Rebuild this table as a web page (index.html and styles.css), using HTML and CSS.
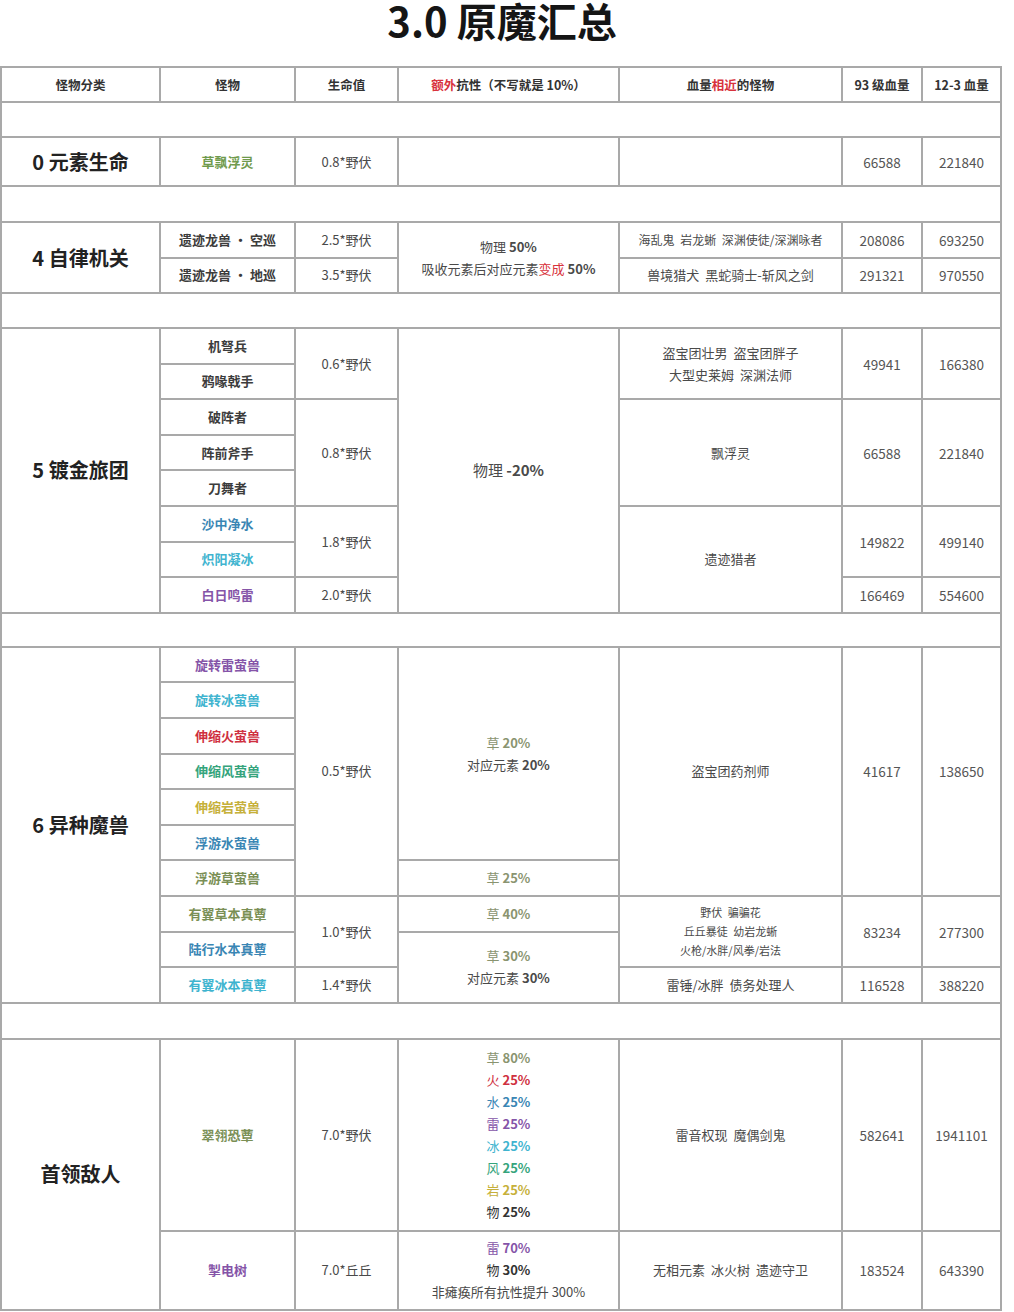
FILE: index.html
```html
<!DOCTYPE html>
<html lang="zh-CN">
<head>
<meta charset="utf-8">
<title>3.0 原魔汇总</title>
<link rel="stylesheet" href="styles.css">
</head>
<body>
<h1 class="title">3.0 原魔汇总</h1>
<table class="sheet">
  <colgroup>
    <col class="c-cat"><col class="c-mon"><col class="c-hp"><col class="c-res"><col class="c-rel"><col class="c-n93"><col class="c-n123">
  </colgroup>
  <thead>
    <tr class="h-head">
      <th>怪物分类</th>
      <th>怪物</th>
      <th>生命值</th>
      <th><span class="red">额外</span>抗性（不写就是 10%）</th>
      <th>血量<span class="red">相近</span>的怪物</th>
      <th>93 级血量</th>
      <th>12-3 血量</th>
    </tr>
  </thead>
  <tbody>
    <tr class="h35"><td colspan="7"></td></tr>

    <tr class="h49">
      <td class="cat">0 元素生命</td>
      <td class="mon dendro-g">草飘浮灵</td>
      <td>0.8*野伏</td>
      <td></td>
      <td></td>
      <td class="num">66588</td>
      <td class="num">221840</td>
    </tr>

    <tr class="h36"><td colspan="7"></td></tr>

    <tr class="h355">
      <td class="cat" rowspan="2">4 自律机关</td>
      <td class="mon">遗迹龙兽 · 空巡</td>
      <td>2.5*野伏</td>
      <td rowspan="2" class="res">物理 <b>50%</b><br>吸收元素后对应元素<span class="red">变成</span> <b>50%</b></td>
      <td class="rel small">海乱鬼 岩龙蜥 深渊使徒/深渊咏者</td>
      <td class="num">208086</td>
      <td class="num">693250</td>
    </tr>
    <tr class="h355">
      <td class="mon">遗迹龙兽 · 地巡</td>
      <td>3.5*野伏</td>
      <td class="rel">兽境猎犬 黑蛇骑士-斩风之剑</td>
      <td class="num">291321</td>
      <td class="num">970550</td>
    </tr>

    <tr class="h35"><td colspan="7"></td></tr>

    <tr class="h356">
      <td class="cat" rowspan="8">5 镀金旅团</td>
      <td class="mon">机弩兵</td>
      <td rowspan="2">0.6*野伏</td>
      <td rowspan="8" class="res big">物理 <b>-20%</b></td>
      <td rowspan="2" class="rel two">盗宝团壮男 盗宝团胖子<br>大型史莱姆 深渊法师</td>
      <td rowspan="2" class="num">49941</td>
      <td rowspan="2" class="num">166380</td>
    </tr>
    <tr class="h356"><td class="mon">鸦喙戟手</td></tr>
    <tr class="h356">
      <td class="mon">破阵者</td>
      <td rowspan="3">0.8*野伏</td>
      <td rowspan="3" class="rel">飘浮灵</td>
      <td rowspan="3" class="num">66588</td>
      <td rowspan="3" class="num">221840</td>
    </tr>
    <tr class="h356"><td class="mon">阵前斧手</td></tr>
    <tr class="h356"><td class="mon">刀舞者</td></tr>
    <tr class="h356">
      <td class="mon hydro">沙中净水</td>
      <td rowspan="2">1.8*野伏</td>
      <td rowspan="3" class="rel">遗迹猎者</td>
      <td rowspan="2" class="num">149822</td>
      <td rowspan="2" class="num">499140</td>
    </tr>
    <tr class="h356"><td class="mon cryo">炽阳凝冰</td></tr>
    <tr class="h356">
      <td class="mon electro">白日鸣雷</td>
      <td>2.0*野伏</td>
      <td class="num">166469</td>
      <td class="num">554600</td>
    </tr>

    <tr class="h34"><td colspan="7"></td></tr>

    <tr class="h356">
      <td class="cat" rowspan="10">6 异种魔兽</td>
      <td class="mon electro">旋转雷萤兽</td>
      <td rowspan="7">0.5*野伏</td>
      <td rowspan="6" class="res two"><span class="dendro">草 <b>20%</b></span><br>对应元素 <b>20%</b></td>
      <td rowspan="7" class="rel">盗宝团药剂师</td>
      <td rowspan="7" class="num">41617</td>
      <td rowspan="7" class="num">138650</td>
    </tr>
    <tr class="h356"><td class="mon cryo">旋转冰萤兽</td></tr>
    <tr class="h356"><td class="mon pyro">伸缩火萤兽</td></tr>
    <tr class="h356"><td class="mon anemo">伸缩风萤兽</td></tr>
    <tr class="h356"><td class="mon geo">伸缩岩萤兽</td></tr>
    <tr class="h356"><td class="mon hydro">浮游水萤兽</td></tr>
    <tr class="h356">
      <td class="mon dendro">浮游草萤兽</td>
      <td class="res dendro">草 <b>25%</b></td>
    </tr>
    <tr class="h356">
      <td class="mon dendro">有翼草本真蕈</td>
      <td rowspan="2">1.0*野伏</td>
      <td class="res dendro">草 <b>40%</b></td>
      <td rowspan="2" class="rel tiny">野伏 骗骗花<br>丘丘暴徒 幼岩龙蜥<br>火枪/水胖/风拳/岩法</td>
      <td rowspan="2" class="num">83234</td>
      <td rowspan="2" class="num">277300</td>
    </tr>
    <tr class="h356">
      <td class="mon hydro">陆行水本真蕈</td>
      <td rowspan="2" class="res two"><span class="dendro">草 <b>30%</b></span><br>对应元素 <b>30%</b></td>
    </tr>
    <tr class="h356">
      <td class="mon cryo">有翼冰本真蕈</td>
      <td>1.4*野伏</td>
      <td class="rel">雷锤/冰胖 债务处理人</td>
      <td class="num">116528</td>
      <td class="num">388220</td>
    </tr>

    <tr class="h36"><td colspan="7"></td></tr>

    <tr class="h192">
      <td class="cat" rowspan="2">首领敌人</td>
      <td class="mon dendro">翠翎恐蕈</td>
      <td>7.0*野伏</td>
      <td class="res list">
        <span class="dendro">草 <b>80%</b></span><br>
        <span class="pyro">火 <b>25%</b></span><br>
        <span class="hydro">水 <b>25%</b></span><br>
        <span class="electro">雷 <b>25%</b></span><br>
        <span class="cryo">冰 <b>25%</b></span><br>
        <span class="anemo">风 <b>25%</b></span><br>
        <span class="geo">岩 <b>25%</b></span><br>
        <span class="phys">物 <b>25%</b></span>
      </td>
      <td class="rel">雷音权现 魔偶剑鬼</td>
      <td class="num">582641</td>
      <td class="num">1941101</td>
    </tr>
    <tr class="h79">
      <td class="mon electro">掣电树</td>
      <td>7.0*丘丘</td>
      <td class="res list">
        <span class="electro">雷 <b>70%</b></span><br>
        <span class="phys">物 <b>30%</b></span><br>
        非瘫痪所有抗性提升 300%
      </td>
      <td class="rel">无相元素 冰火树 遗迹守卫</td>
      <td class="num">183524</td>
      <td class="num">643390</td>
    </tr>
  </tbody>
</table>
</body>
</html>
```

FILE: styles.css
```css
html, body {
  margin: 0;
  padding: 0;
  background: #ffffff;
}

body {
  font-family: "Noto Sans CJK SC", "Noto Sans", sans-serif;
  color: #4a4a4a;
  width: 1014px;
  overflow: hidden;
}

.title {
  margin: 0;
  height: 40px;
  line-height: 40px;
  font-size: 40px;
  font-weight: 700;
  color: #151515;
  text-align: center;
  padding-right: 10px;
}

.sheet {
  margin-top: 26px;
  width: 1001px;
  border-collapse: collapse;
  table-layout: fixed;
}

.c-cat { width: 159px; }
.c-mon { width: 135px; }
.c-hp { width: 103px; }
.c-res { width: 221px; }
.c-rel { width: 223px; }
.c-n93 { width: 80px; }
.c-n123 { width: 79px; }

.sheet th,
.sheet td {
  border: 2px solid #a9a9a9;
  padding: 0 2px;
  text-align: center;
  vertical-align: middle;
  font-size: 13px;
  line-height: 18px;
  white-space: nowrap;
  overflow: hidden;
}

.sheet th {
  font-weight: 700;
  color: #333333;
  font-size: 12.5px;
}

.h-head { height: 35px; }
.h34 { height: 34px; }
.h35 { height: 35px; }
.h355 { height: 35.5px; }
.h356 { height: 35.6px; }
.h36 { height: 36px; }
.h49 { height: 49px; }
.h192 { height: 192px; }
.h79 { height: 79px; }

.sheet td.cat {
  font-size: 20px;
  font-weight: 700;
  color: #222222;
}

.sheet td.mon {
  font-weight: 700;
  color: #3c3c3c;
}

.sheet td.num {
  font-size: 13.5px;
  color: #555555;
}

.sheet td.rel {
  color: #4a4a4a;
  word-spacing: 3px;
}

.sheet td.rel.small {
  font-size: 12px;
}

.sheet td.rel.two,
.sheet td.res.two {
  line-height: 22px;
}

.sheet td.rel.tiny {
  font-size: 11px;
  line-height: 19px;
}

.sheet td.res {
  line-height: 22px;
}

.sheet td.res.big {
  font-size: 15px;
}

.sheet td.res.list {
  line-height: 22px;
}

.sheet b {
  font-weight: 700;
}

.red { color: #d8323c; }

.dendro-g { color: #6f9a4c !important; }
.dendro { color: #8a9470 !important; }
.sheet td.mon.dendro { color: #7a8f55 !important; }
.pyro { color: #cf3040 !important; }
.hydro { color: #3a86b4 !important; }
.electro { color: #8554a8 !important; }
.cryo { color: #3fb4cf !important; }
.anemo { color: #35a47c !important; }
.geo { color: #c6b03a !important; }
.phys { color: #333333 !important; }
```
